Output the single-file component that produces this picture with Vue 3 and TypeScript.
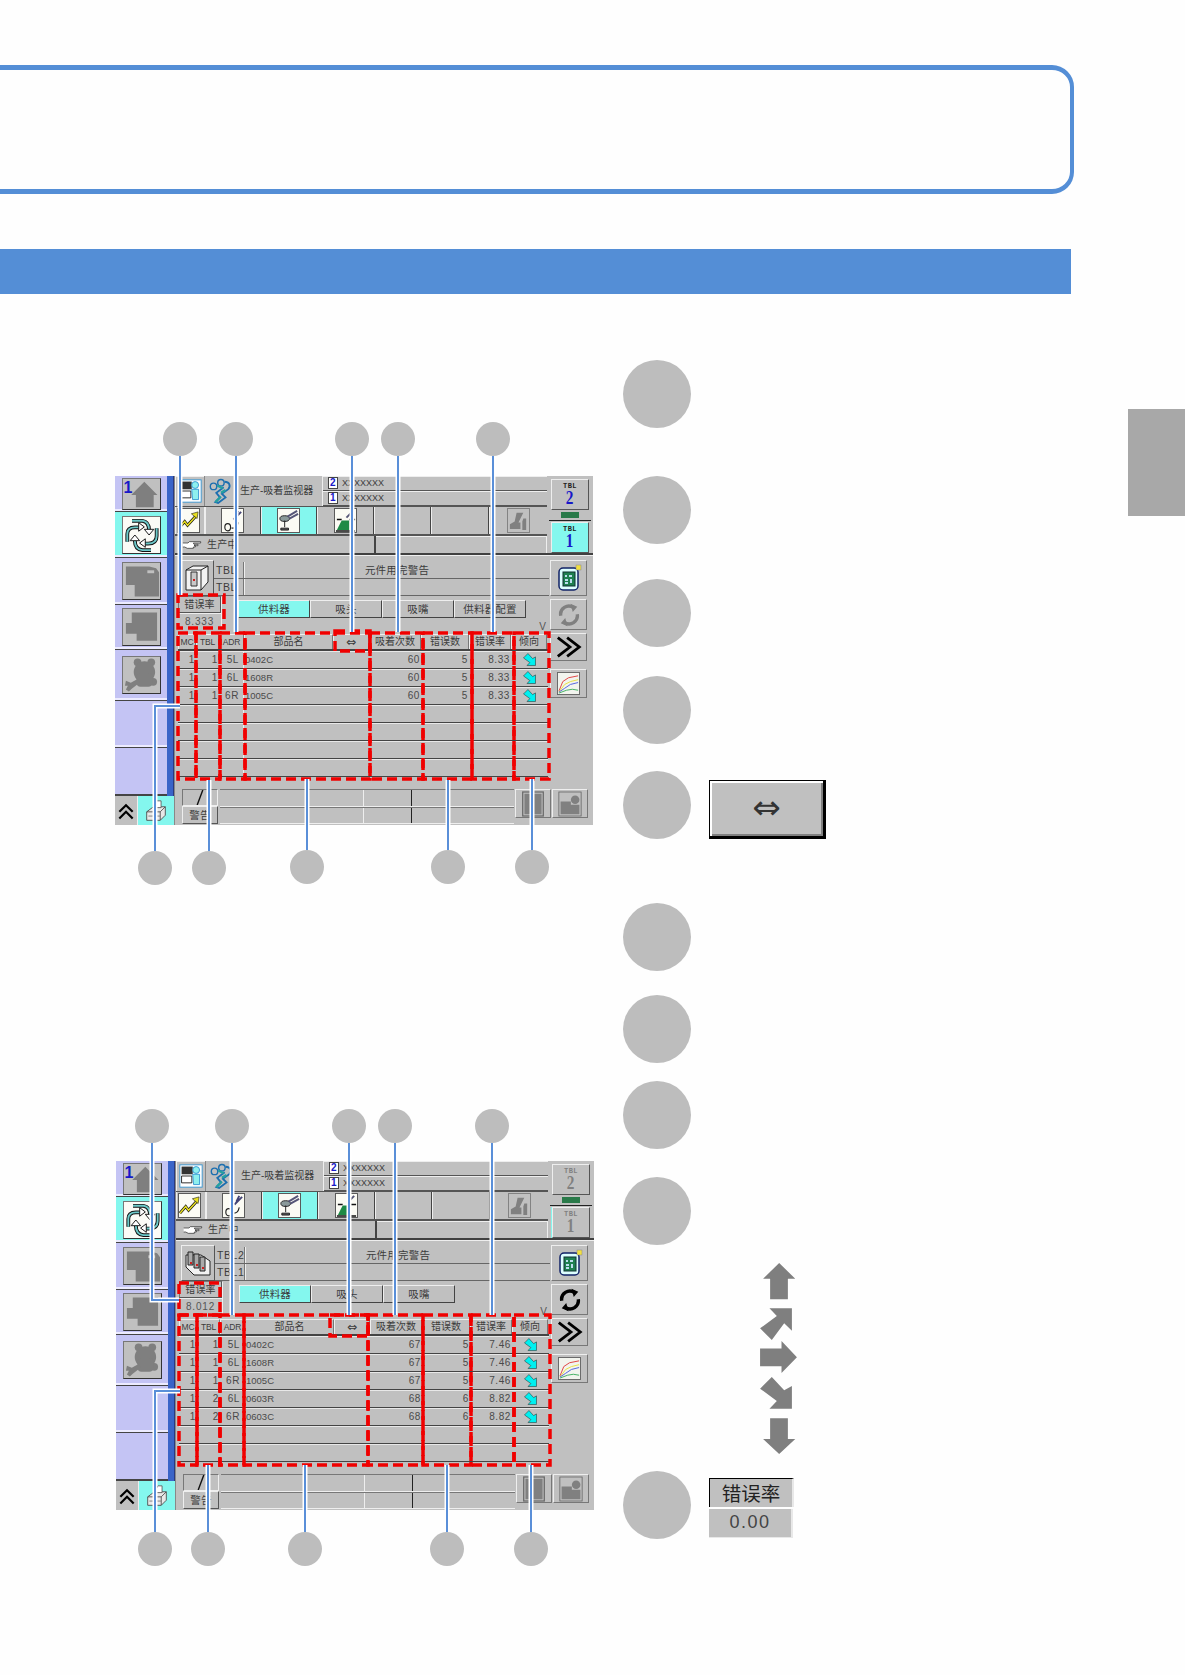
<script setup lang="ts">
interface Row { mc: string; tbl: string; adr: string; name: string; count: string; errs: string; rate: string }
interface Figure {
  id: number; top: number; height: number; screenTop: number; screenLeft: number;
  err: string; machine: string; tbl1: string; tbl2: string; active: boolean;
  tabs: string[]; rows: Row[];
  circles: number[][]; lines: string[]; rects: number[][];
}

function rowsFrom(list: string[][]): Row[] {
  const out: Row[] = list.map(r => ({ mc: r[0], tbl: r[1], adr: r[2], name: r[3], count: r[4], errs: r[5], rate: r[6] }));
  while (out.length < 7) out.push({ mc: '', tbl: '', adr: '', name: '', count: '', errs: '', rate: '' });
  return out;
}
function columns(edges: number[], y: number, h: number): number[][] {
  return edges.slice(0, -1).map((x, i) => [x, y, edges[i + 1] - x, h]);
}

const figures: Figure[] = [
  {
    id: 1, top: 422, height: 463, screenTop: 54, screenLeft: 115,
    err: '8.333', machine: 'ic-machine1', tbl1: 'TBL', tbl2: 'TBL', active: true,
    tabs: ['供料器', '吸头', '吸嘴', '供料器配置'],
    rows: rowsFrom([
      ['1', '1', '5L', '0402C', '60', '5', '8.33'],
      ['1', '1', '6L', '1608R', '60', '5', '8.33'],
      ['1', '1', '6R', '1005C', '60', '5', '8.33'],
    ]),
    circles: [[180, 439], [236, 439], [352, 439], [398, 439], [493, 439], [155, 868], [209, 868], [307, 867], [448, 867], [532, 867]],
    lines: ['180,456 180,595', '236,456 236,632', '352,456 352,632', '398,456 398,632', '493,456 493,632',
      '155,851 155,706 180,706', '209,851 209,780', '307,850 307,779', '448,850 448,780', '532,850 532,779'],
    rects: [[178, 595, 46, 33], [335, 631, 35, 20], ...columns([178, 196, 220, 245, 370, 423, 472, 514, 549], 633, 146)],
  },
  {
    id: 2, top: 1109, height: 457, screenTop: 52, screenLeft: 116,
    err: '8.012', machine: 'ic-machine3', tbl1: 'TBL1', tbl2: 'TBL2', active: false,
    tabs: ['供料器', '吸头', '吸嘴'],
    rows: rowsFrom([
      ['1', '1', '5L', '0402C', '67', '5', '7.46'],
      ['1', '1', '6L', '1608R', '67', '5', '7.46'],
      ['1', '1', '6R', '1005C', '67', '5', '7.46'],
      ['1', '2', '6L', '0603R', '68', '6', '8.82'],
      ['1', '2', '6R', '0603C', '68', '6', '8.82'],
    ]),
    circles: [[152, 1126], [232, 1126], [349, 1126], [395, 1126], [492, 1126], [155, 1549], [208, 1549], [305, 1549], [447, 1549], [531, 1549]],
    lines: ['152,1143 152,1300 179,1300', '232,1143 232,1315', '349,1143 349,1315', '395,1143 395,1315', '492,1143 492,1315',
      '155,1532 155,1391 180,1391', '208,1532 208,1465', '305,1532 305,1465', '447,1532 447,1465', '531,1532 531,1465'],
    rects: [[179, 1283, 41, 32], [330, 1315, 38, 21], ...columns([179, 197, 220, 244, 368, 423, 471, 514, 550], 1315, 150)],
  },
];

const headers = [
  { text: 'MC', cls: 'latin' }, { text: 'TBL', cls: 'latin' }, { text: 'ADR', cls: 'latin' },
  { text: '部品名', cls: '' }, { text: '⇔', cls: 'swap' },
  { text: '吸着次数', cls: '' }, { text: '错误数', cls: '' }, { text: '错误率', cls: '' }, { text: '倾向', cls: '' },
];
const topTabs = ['ic-zigzag', 'ic-nozzle', 'ic-head', 'ic-mount', '', '', 'ic-grey1'];

const legend = [
  { h: 116, kind: '' }, { h: 103, kind: '' }, { h: 97, kind: '' }, { h: 95, kind: '' },
  { h: 132, kind: 'button' }, { h: 92, kind: '' }, { h: 86, kind: '' }, { h: 96, kind: '' },
  { h: 294, kind: 'arrows' }, { h: 80, kind: 'rate' },
];
</script>

<template>
  <div class="page">
    <svg class="defs" aria-hidden="true">
      <symbol id="ic-house" viewBox="0 0 38 32"><path d="M22 3 36 17h-4v13H13V17H8z" fill="#7f7f7f" /></symbol>
      <symbol id="ic-cycle" viewBox="0 0 38 38">
        <g fill="none" stroke="#111" stroke-width="4">
          <path d="M9 4H20Q27 5 27 14" /><path d="M35 12V20Q35 28 26 28H21" /><path d="M29 35H20Q12 34 12 25" /><path d="M4 26V18Q4 11 12 11H17" />
        </g>
        <g fill="none" stroke="#6cc8c8" stroke-width="2">
          <path d="M9 4H20Q27 5 27 14" /><path d="M35 12V20Q35 28 26 28H21" /><path d="M29 35H20Q12 34 12 25" /><path d="M4 26V18Q4 11 12 11H17" />
        </g>
        <path d="M22 13h10l-5 6zM23 23v9l-6-4.500zM7 25h10l-5-6zM16 6v9l6-4.500z" fill="#fff" stroke="#111" />
      </symbol>
      <symbol id="ic-blob1" viewBox="0 0 38 36"><path d="M3 3H27L34 5 37 9V34H12V22H3z" fill="#7f7f7f" /><rect x="25" y="7" width="7" height="3" fill="#c0c0c0" /></symbol>
      <symbol id="ic-blob2" viewBox="0 0 38 36"><path d="M9 3H35V32H14V25H3V14H9z" fill="#7f7f7f" /></symbol>
      <symbol id="ic-bear" viewBox="0 0 38 36">
        <g fill="#7f7f7f">
          <circle cx="15" cy="5" r="4" /><circle cx="29" cy="5" r="4" /><circle cx="22" cy="15" r="11" />
          <circle cx="31" cy="25" r="4" /><rect x="14" y="16" width="16" height="14" rx="4" />
          <path d="M15 22 17 26 9 32 6 35 3 33 5 29 2 29 3 24 8 26z" />
        </g>
      </symbol>
      <symbol id="ic-chev2" viewBox="0 0 24 24"><path d="M4 13 12 5 20 13M4 21 12 13 20 21" fill="none" stroke="#000" stroke-width="2.600" /></symbol>
      <symbol id="ic-tray" viewBox="0 0 26 26">
        <path d="M2 14 10 8H24V18L18 24H2z" fill="#e8e8e8" stroke="#444" />
        <path d="M2 14H18V24M18 14 24 8" fill="none" stroke="#444" />
        <path d="M10 9 14 1H19V9z" fill="#fff" stroke="#555" />
        <path d="M4 19H18" stroke="#777" />
      </symbol>
      <symbol id="ic-person" viewBox="0 0 28 28">
        <rect x="1" y="1" width="26" height="26" fill="#fff" stroke="#2a90d0" />
        <rect x="3" y="3" width="13" height="9" fill="#333" />
        <path d="M3 14H15V22H3z" fill="none" stroke="#111" />
        <circle cx="20" cy="7" r="4" fill="#8ef0ee" stroke="#2a90d0" />
        <path d="M16 12H24V24H17z" fill="#8ef0ee" stroke="#2a90d0" />
      </symbol>
      <symbol id="ic-runner" viewBox="0 0 26 28">
        <circle cx="6" cy="9" r="3.500" fill="none" stroke="#1c6fb0" stroke-width="1.500" />
        <circle cx="14" cy="5" r="3.500" fill="none" stroke="#1c6fb0" stroke-width="1.500" />
        <path d="M18 4C23 4 25 8 22 12L15 17 19 21 11 27 8 26 13 21 9 16 17 10" fill="none" stroke="#1c6fb0" stroke-width="2" />
        <path d="M8 26 14 20M14 16 19 13M10 8 16 11" stroke="#25a0a0" stroke-width="2.500" />
      </symbol>
      <symbol id="ic-zigzag" viewBox="0 0 24 26">
        <rect x="0.500" y="0.500" width="23" height="25" fill="#fbfbf4" stroke="#555" />
        <path d="M2 21 8 14 11 18 20 8" fill="none" stroke="#111" stroke-width="3" />
        <path d="M2 21 8 14 11 18 20 8" fill="none" stroke="#e8e020" stroke-width="1.500" />
        <path d="M15 6 22 4 21 11z" fill="#e8e020" stroke="#111" stroke-width=".6" />
      </symbol>
      <symbol id="ic-nozzle" viewBox="0 0 24 26">
        <rect x="0.500" y="0.500" width="23" height="25" fill="#fbfbf4" stroke="#555" />
        <path d="M4 20C4 15 10 15 10 20S4 25 4 20M11 21C15 21 17 20 18 15" fill="none" stroke="#222" stroke-width="1.200" />
        <path d="M13 12 21 4M15 9 18 3" stroke="#447" stroke-width="2" />
      </symbol>
      <symbol id="ic-head" viewBox="0 0 24 26">
        <rect x="0.500" y="0.500" width="23" height="25" fill="#fbfbf4" stroke="#555" />
        <ellipse cx="8" cy="11" rx="5" ry="3" fill="#8a9a9a" stroke="#222" />
        <path d="M8 13V20M4 23H12V21H4z" stroke="#222" fill="#555" />
        <path d="M11 9 21 3M13 11 22 6" stroke="#557" stroke-width="2" />
      </symbol>
      <symbol id="ic-mount" viewBox="0 0 24 26">
        <rect x="0.500" y="0.500" width="23" height="25" fill="#fbfbf4" stroke="#555" />
        <path d="M3 23 8 13H16V23z" fill="#1e8a46" />
        <path d="M2 24H22M3 12H8M16 12H22" stroke="#111" stroke-width="1.500" />
        <path d="M13 10 20 3" stroke="#557" stroke-width="2" />
      </symbol>
      <symbol id="ic-grey1" viewBox="0 0 24 26">
        <rect x="0.500" y="0.500" width="23" height="25" fill="#c0c0c0" stroke="#808080" />
        <path d="M3 22V17L8 14 10 5H17L12 15H14V22z" fill="#808080" />
        <path d="M17 11H20V23H16V14z" fill="#808080" />
      </symbol>
      <symbol id="ic-hand" viewBox="0 0 30 14">
        <path d="M1 4H9L11 2H28V4H17L18 6H24V8H18L20 8V10H17V12H8L4 10H1" fill="#fff" stroke="#222" />
      </symbol>
      <symbol id="ic-machine1" viewBox="0 0 26 28">
        <path d="M2 6 9 2H24V18L17 26H2z" fill="#f2f2f2" stroke="#222" />
        <path d="M2 6H17V26M17 6 24 2" fill="none" stroke="#222" />
        <path d="M7 8H13V22H7z" fill="#c8c8c8" stroke="#333" />
        <rect x="9" y="15" width="2" height="2" fill="#d02020" />
      </symbol>
      <symbol id="ic-machine3" viewBox="0 0 26 28">
        <path d="M1 6H16L25 12V26H9L1 18z" fill="#f2f2f2" stroke="#222" />
        <path d="M3 3H8V16H3zM9 5H14V19H9zM15 8H20V22H15z" fill="#aaa" stroke="#222" />
        <rect x="5" y="13" width="2" height="2" fill="#d02020" /><rect x="11" y="15" width="2" height="2" fill="#d02020" /><rect x="17" y="18" width="2" height="2" fill="#d02020" />
      </symbol>
      <symbol id="ic-board" viewBox="0 0 26 28">
        <rect x="3" y="4" width="19" height="22" rx="4" fill="#dff" stroke="#126" stroke-width="1.500" />
        <rect x="7" y="8" width="12" height="14" fill="#1e8050" stroke="#133" />
        <path d="M9 11h2v2H9zM13 11h3v2h-3zM9 15h3v2H9zM14 15h2v4h-2zM9 18h3v2H9z" fill="#bde" />
        <rect x="20" y="1" width="5" height="5" fill="#f2e040" stroke="#888" stroke-width=".5" />
      </symbol>
      <symbol id="ic-refresh" viewBox="0 0 32 32">
        <path d="M5 17A11 11 0 0 1 22 6" fill="none" stroke="currentColor" stroke-width="4.500" />
        <path d="M27 15A11 11 0 0 1 10 26" fill="none" stroke="currentColor" stroke-width="4.500" />
        <path d="M18 1 27 5 21 12zM14 31 5 27 11 20z" fill="currentColor" />
      </symbol>
      <symbol id="ic-forward" viewBox="0 0 30 24"><path d="M3 2 16 12 3 22M13 2 26 12 13 22" fill="none" stroke="#000" stroke-width="3" /></symbol>
      <symbol id="ic-chart" viewBox="0 0 24 24">
        <rect x="0.500" y="0.500" width="23" height="23" fill="#f2f4ee" stroke="#666" />
        <path d="M2 20 6 10 12 6 22 4" fill="none" stroke="#e04040" />
        <path d="M2 21 8 13 14 10 22 8" fill="none" stroke="#e8e040" />
        <path d="M2 21 8 17 14 13 22 11" fill="none" stroke="#5060e0" />
        <path d="M2 22 10 19 16 18 22 19" fill="none" stroke="#40b060" />
      </symbol>
      <symbol id="ic-trend" viewBox="446 406 103 103">
        <polygon points="485,410 522,450 545,437 545,505 478,505 500,482 450,445" fill="#00f0f0" stroke="#222" stroke-width="4" />
      </symbol>
      <symbol id="ic-book" viewBox="0 0 28 30"><rect x="2" y="1" width="24" height="28" fill="none" stroke="#6a6a6a" stroke-width="1.500" /><rect x="4" y="3" width="20" height="24" fill="#808080" /></symbol>
      <symbol id="ic-lock" viewBox="0 0 28 30">
        <rect x="1" y="1" width="26" height="28" fill="none" stroke="#6a6a6a" />
        <path d="M3 12H15V27H3zM15 16H25V27H15z" fill="#808080" /><circle cx="20" cy="10" r="5" fill="#808080" />
      </symbol>
    </svg>

    <main class="main">
      <div class="note-box"></div>
      <div class="section-bar"></div>

      <div class="content">
        <div class="figures">
          <section
            v-for="fig in figures"
            :key="fig.id"
            class="figure"
            :class="'fig-' + fig.id"
            :style="{ height: fig.height + 'px' }"
          >
            <div class="screen" :class="{ off: !fig.active }" :style="{ marginTop: fig.screenTop + 'px', marginLeft: fig.screenLeft + 'px' }">
              <div class="rail">
                <div class="rail-top">
                  <div class="rail-cells">
                    <div class="rail-cell c36">
                      <div class="rail-btn h32"><span class="digit">1</span><svg class="i-fill"><use href="#ic-house" /></svg></div>
                    </div>
                    <div class="rail-cell c46 sel"><div class="rail-btn white h38"><svg class="i-fill"><use href="#ic-cycle" /></svg></div></div>
                    <div class="rail-cell c47"><div class="rail-btn"><svg class="i-fill"><use href="#ic-blob1" /></svg></div></div>
                    <div class="rail-cell c45"><div class="rail-btn"><svg class="i-fill"><use href="#ic-blob2" /></svg></div></div>
                    <div class="rail-cell c51"><div class="rail-btn"><svg class="i-fill"><use href="#ic-bear" /></svg></div></div>
                    <div class="rail-cell c47"></div>
                    <div class="rail-cell c48 end"></div>
                  </div>
                  <div class="rail-blue"></div>
                </div>
                <div class="rail-bottom">
                  <div class="rail-up"><svg class="i-20"><use href="#ic-chev2" /></svg></div>
                  <div class="rail-tray"><svg class="i-22"><use href="#ic-tray" /></svg></div>
                </div>
              </div>

              <div class="panel">
                <div class="head">
                  <div class="head-left">
                    <div class="h-row1">
                      <div class="cell-person"><svg class="i-28"><use href="#ic-person" /></svg></div>
                      <div class="cell-title"><svg class="i-runner"><use href="#ic-runner" /></svg><span>生产-吸着监视器</span></div>
                      <div class="cell-boards">
                        <div class="board-row"><span class="num">2</span><span class="xx">XXXXXXX</span></div>
                        <div class="board-row"><span class="num">1</span><span class="xx">XXXXXXX</span></div>
                      </div>
                    </div>
                    <div class="h-row2">
                      <div
                        v-for="(t, i) in topTabs"
                        :key="i"
                        class="top-tab"
                        :class="['tt-' + i, { on: i === 2 }]"
                      >
                        <svg v-if="t" class="i-tab"><use :href="'#' + t" /></svg>
                      </div>
                    </div>
                    <div class="h-row3">
                      <div class="status"><svg class="i-hand"><use href="#ic-hand" /></svg><span>生产中</span></div>
                      <div class="status-right"></div>
                    </div>
                  </div>
                  <div class="head-right">
                    <div class="tbl-btn"><small>TBL</small><b>2</b></div>
                    <div class="tbl-mid"><i></i></div>
                    <div class="tbl-btn" :class="{ cyan: fig.active, strip: !fig.active }"><small>TBL</small><b>1</b></div>
                  </div>
                </div>

                <div class="body">
                  <div class="upper">
                    <div class="upper-left">
                      <div class="row-a">
                        <div class="machine-btn"><svg class="i-machine"><use :href="'#' + fig.machine" /></svg></div>
                        <div class="tbl-lines">
                          <div class="tl"><span class="tl-name">{{ fig.tbl2 }}</span><span class="tl-text">元件用完警告</span></div>
                          <div class="tl"><span class="tl-name">{{ fig.tbl1 }}</span><span class="tl-text"></span></div>
                        </div>
                      </div>
                      <div class="row-b">
                        <div class="err">
                          <div class="err-h">错误率</div>
                          <div class="err-v">{{ fig.err }}</div>
                        </div>
                        <div class="sub-tabs">
                          <div v-for="(t, i) in fig.tabs" :key="t" class="sub-tab" :class="{ on: i === 0 }">{{ t }}</div>
                        </div>
                        <span class="vee">V</span>
                      </div>
                      <div class="tbl">
                        <div class="tr th">
                          <div v-for="h in headers" :key="h.text" class="thc" :class="h.cls">{{ h.text }}</div>
                        </div>
                        <div v-for="(r, i) in fig.rows" :key="i" class="tr td">
                          <div class="num-c">{{ r.mc }}</div>
                          <div class="num-c">{{ r.tbl }}</div>
                          <div class="num-c adr">{{ r.adr }}</div>
                          <div class="name-c">{{ r.name }}</div>
                          <div class="num-c">{{ r.count }}</div>
                          <div class="num-c">{{ r.errs }}</div>
                          <div class="num-c">{{ r.rate }}</div>
                          <div class="trend"><svg v-if="r.name" class="i-trend"><use href="#ic-trend" /></svg></div>
                        </div>
                      </div>
                    </div>
                    <div class="upper-right">
                      <div class="side-btn h35"><svg class="i-board"><use href="#ic-board" /></svg></div>
                      <div class="side-btn h31" :class="fig.active ? 'grey-ic' : 'black-ic'"><svg class="i-refresh"><use href="#ic-refresh" /></svg></div>
                      <div class="side-btn h28"><svg class="i-forward"><use href="#ic-forward" /></svg></div>
                      <div class="side-btn h29 mt8"><svg class="i-chart"><use href="#ic-chart" /></svg></div>
                    </div>
                  </div>

                  <div class="lower">
                    <div class="warn">
                      <div class="warn-top"><svg class="i-slash" viewBox="0 0 8 16"><path d="M7 0 1 16" stroke="#111" stroke-width="1.500" /></svg></div>
                      <div class="warn-btn">警告</div>
                    </div>
                    <div class="msgs">
                      <div class="msg"><i></i><i></i><i></i></div>
                      <div class="msg"><i></i><i></i><i></i></div>
                    </div>
                    <div class="low-btn"><svg class="i-low"><use href="#ic-book" /></svg></div>
                    <div class="low-btn"><svg class="i-low"><use href="#ic-lock" /></svg></div>
                  </div>
                </div>
              </div>
            </div>

            <svg class="annot" :viewBox="'0 ' + fig.top + ' 623 ' + fig.height" :width="623" :height="fig.height">
              <rect
                v-for="(r, i) in fig.rects"
                :key="'r' + i"
                :x="r[0]"
                :y="r[1]"
                :width="r[2]"
                :height="r[3]"
                fill="none"
                stroke="#f00000"
                stroke-width="3.5"
                stroke-dasharray="10 5"
              />
              <polyline v-for="(l, i) in fig.lines" :key="'h' + i" :points="l" fill="none" stroke="#fff" stroke-width="5" />
              <polyline v-for="(l, i) in fig.lines" :key="'l' + i" :points="l" fill="none" stroke="#5a8fd8" stroke-width="2" />
              <circle v-for="(c, i) in fig.circles" :key="'c' + i" :cx="c[0]" :cy="c[1]" r="17" fill="#bdbdbd" />
            </svg>
          </section>
        </div>

        <div class="legend">
          <div v-for="(item, i) in legend" :key="i" class="legend-row" :style="{ height: item.h + 'px' }">
            <div class="dot"></div>
            <div v-if="item.kind === 'button'" class="swap-btn">⇔</div>
            <svg v-if="item.kind === 'arrows'" class="arrows" viewBox="450 70 110 570">
              <g fill="#7f7f7f">
                <polygon points="507,70 555,117 533,117 533,178 480,178 480,117 459,117" />
                <polygon points="478,205 545,205 545,272 522,250 485,300 450,265 500,228" />
                <polygon points="514,303 560,351 514,398 514,378 450,378 450,325 514,325" />
                <polygon points="485,410 522,450 545,437 545,505 478,505 500,482 450,445" />
                <polygon points="480,533 533,533 533,595 555,595 507,640 459,595 480,595" />
              </g>
            </svg>
            <div v-if="item.kind === 'rate'" class="rate">
              <div class="rate-h">错误率</div>
              <div class="rate-v">0.00</div>
            </div>
          </div>
        </div>
      </div>
    </main>

    <aside class="edge-tab"></aside>
  </div>
</template>

<style>
html, body { margin: 0; background: #fff; }
</style>

<style scoped>
.page { display: flex; width: 1185px; height: 1675px; overflow: hidden; background: #fefefe; font-family: "Liberation Sans", "Noto Sans CJK SC", sans-serif; }
.defs { position: absolute; width: 0; height: 0; }
.main { width: 1128px; flex: none; }
.edge-tab { width: 57px; height: 107px; margin-top: 409px; background: #a8a8a8; }

.note-box { box-sizing: border-box; width: 1104px; height: 129px; margin-top: 65px; margin-left: -30px; border: 5px solid #548ed6; border-right-width: 4px; border-radius: 22px; }
.section-bar { width: 1071px; height: 45px; margin-top: 55px; background: #548ed6; }

.content { display: flex; }
.figures { width: 623px; flex: none; padding-top: 128px; }
.figure { position: relative; width: 623px; display: flow-root; }
.fig-2 { margin-top: 224px; }
.annot { position: absolute; left: 0; top: 0; pointer-events: none; }

/* screen */
.screen { display: flex; width: 478px; height: 349px; background: #c0c0c0; color: #3c3c3c; font-size: 10px; line-height: 1; letter-spacing: .2px; }
.screen * { box-sizing: border-box; }
.rail { width: 59px; flex: none; display: flex; flex-direction: column; }
.rail-top { display: flex; height: 320px; }
.rail-cells { width: 52px; background: #c4c4f4; display: flex; flex-direction: column; }
.rail-blue { width: 7px; background: #3a64c8; border-right: 1px solid #2a3a80; }
.rail-cell { display: flex; align-items: center; justify-content: center; border-bottom: 1px solid #444; box-shadow: inset 0 -2px 0 #ecebff; }
.rail-cell.end { border-bottom: 2px solid #444; box-shadow: none; }
.rail-cell.sel { background: #84f7ee; }
.c36 { height: 36px; } .c45 { height: 45px; } .c46 { height: 46px; } .c47 { height: 47px; } .c48 { height: 48px; } .c51 { height: 51px; }
.rail-btn { position: relative; width: 39px; height: 38px; background: #c0c0c0; border: 1px solid #777; border-right-color: #333; border-bottom-color: #333; }
.rail-btn.h32 { height: 32px; }
.rail-btn.h38 { height: 38px; }
.rail-btn.white { background: #fbfbf6; }
.i-fill { display: block; width: 100%; height: 100%; }
.digit { position: absolute; left: 1px; top: 0; font: bold 16px "Liberation Sans", sans-serif; color: #1818c8; }
.rail-bottom { display: flex; height: 29px; }
.rail-up { width: 23px; display: flex; align-items: center; justify-content: center; background: #c0c0c0; border-right: 1px solid #eee; }
.rail-tray { flex: 1; display: flex; align-items: center; justify-content: center; background: #84f7ee; }
.i-20 { width: 20px; height: 20px; }
.i-22 { width: 22px; height: 24px; }

.panel { flex: 1; display: flex; flex-direction: column; border-left: 1px solid #888; min-width: 0; }
.head { display: flex; height: 77px; }
.head-left { width: 372px; flex: none; }
.h-row1 { display: flex; height: 31px; border-bottom: 1px solid #555; }
.cell-person { width: 30px; display: flex; align-items: center; justify-content: center; border-right: 1px solid #888; box-shadow: inset 1px 1px #eee; }
.i-28 { width: 24px; height: 26px; }
.cell-title { width: 118px; display: flex; align-items: center; gap: 8px; padding-left: 3px; border-right: 1px solid #eee; }
.i-runner { width: 24px; height: 28px; flex: none; }
.cell-title span { white-space: nowrap; letter-spacing: 0; }
.cell-boards { flex: 1; display: flex; flex-direction: column; }
.board-row { flex: 1; display: flex; align-items: center; gap: 4px; padding-left: 5px; border-bottom: 1px solid #555; box-shadow: inset 0 1px #eee; }
.num { width: 10px; height: 12px; background: #fff; border: 1px solid #444; color: #1818c8; font: bold 10px/10px "Liberation Sans", sans-serif; text-align: center; }
.xx { font-size: 9px; letter-spacing: 0; }
.h-row2 { display: flex; height: 29px; border-bottom: 2px solid #555; }
.top-tab { display: flex; align-items: center; justify-content: center; border-right: 1px solid #444; box-shadow: inset 1px 0 #eee; }
.tt-0 { width: 30px; border-right-color: #eee; padding-right: 2px; } .tt-1 { width: 56px; } .tt-2 { width: 56px; } .tt-3 { width: 57px; } .tt-4 { width: 57px; } .tt-5 { width: 58px; } .tt-6 { width: 58px; border-right: none; }
.top-tab.on { background: #84f7ee; }
.i-tab { width: 23px; height: 25px; }
.h-row3 { display: flex; height: 17px; }
.status { width: 201px; display: flex; align-items: center; gap: 5px; padding-left: 7px; border-right: 2px solid #444; }
.i-hand { width: 20px; height: 12px; flex: none; }
.status-right { flex: 1; border-top: 1px solid #eee; border-right: 1px solid #eee; }
.head-right { flex: 1; display: flex; flex-direction: column; padding: 3px 4px 0; }
.tbl-btn { height: 31px; display: flex; flex-direction: column; align-items: center; border: 1px solid #555; border-top-color: #eee; border-left-color: #eee; color: #1818c8; padding-top: 3px; }
.tbl-btn small { font: bold 7px/7px "Liberation Mono", monospace; color: #222; letter-spacing: .5px; }
.tbl-btn b { font: bold 18px/17px "Liberation Serif", serif; transform: scaleX(.85); }
.tbl-btn.cyan { background: #84f7ee; }
.tbl-btn.strip { box-shadow: -1px 0 #84f7ee; }
.off .tbl-btn { color: #808080; }
.off .tbl-btn small { color: #808080; }
.tbl-mid { height: 10px; display: flex; flex-direction: column; align-items: center; margin: 1px -2px 1px; border-bottom: 1px solid #222; }
.tbl-mid i { width: 18px; height: 6px; background: #2a7a4a; margin-top: 1px; }

.body { flex: 1; display: flex; flex-direction: column; padding: 5px 3px 0 3px; border-top: 2px solid #404040; box-shadow: inset 0 1px #eee; position: relative; }
.upper { display: flex; height: 221px; gap: 1px; }
.upper-left { width: 371px; flex: none; display: flex; flex-direction: column; }
.row-a { display: flex; height: 36px; }
.machine-btn { width: 34px; margin-left: 2px; display: flex; align-items: center; justify-content: center; border: 1px solid #555; border-top-color: #eee; border-left-color: #eee; }
.i-machine { width: 26px; height: 28px; }
.tbl-lines { flex: 1; display: flex; flex-direction: column; padding-top: 2px; }
.tl { flex: 1; display: flex; align-items: center; border-bottom: 1px solid #666; }
.tl-name { width: 30px; padding-left: 2px; border-right: 1px solid #777; height: 100%; display: flex; align-items: center; letter-spacing: .6px; font-size: 10.500px; }
.tl-text { flex: 1; text-align: center; height: 100%; display: flex; align-items: center; justify-content: center; border-left: 1px solid #eee; font-size: 10.500px; }
.row-b { position: relative; display: flex; height: 38px; }
.err { width: 43px; flex: none; }
.err-h { height: 17px; text-align: center; line-height: 16px; border: 1px solid #555; border-top-color: #777; border-left-color: #777; box-shadow: 1px 1px #eee; }
.err-v { height: 15px; text-align: center; line-height: 15px; margin-top: 1px; color: #555; letter-spacing: .8px; box-shadow: 1px 0 #eee; }
.sub-tabs { display: flex; height: 18px; margin: 4px 0 0 17px; }
.sub-tab { width: 72px; text-align: center; line-height: 16px; border-right: 1px solid #444; border-bottom: 1px solid #444; border-top: 1px solid #eee; border-left: 1px solid #eee; font-size: 10.500px; }
.sub-tab.on { background: #84f7ee; }
.vee { position: absolute; right: 3px; bottom: 2px; font-size: 10px; color: #555; }

.tbl { width: 370px; }
.tr { display: grid; grid-template-columns: 18px 23px 25px 89px 36px 52px 48px 42px 36px; }
.th { height: 17px; border-bottom: 2px solid #444; }
.thc { text-align: center; line-height: 14px; border-top: 1px solid #eee; border-left: 1px solid #eee; border-right: 1px solid #777; font-size: 10px; white-space: nowrap; overflow: hidden; letter-spacing: 0; }
.thc.latin { font-size: 8.500px; letter-spacing: -.2px; }
.thc.swap { font-family: "DejaVu Sans", sans-serif; font-size: 12px; }
.td { height: 18px; border-bottom: 1px solid #444; box-shadow: inset 0 1px #e8e8e8; }
.td .num-c { text-align: right; line-height: 17px; padding-right: 1px; color: #4a4a4a; letter-spacing: .6px; }
.td .adr { padding-right: 4px; border-right: 1px solid #eee; }
.name-c { grid-column: span 2; line-height: 17px; padding-left: 1px; letter-spacing: 0; color: #4a4a4a; font-size: 9.500px; }
.trend { display: flex; align-items: center; justify-content: center; }
.i-trend { width: 13px; height: 13px; }

.upper-right { width: 37px; flex: none; display: flex; flex-direction: column; }
.side-btn { display: flex; align-items: center; justify-content: center; border: 1px solid #777; border-top-color: #eee; border-left-color: #eee; margin-bottom: 3px; }
.h35 { height: 36px; } .h31 { height: 31px; } .h28 { height: 28px; margin-bottom: 0; } .h29 { height: 29px; }
.mt8 { margin-top: 8px; }
.i-board { width: 26px; height: 28px; }
.i-refresh { width: 24px; height: 24px; }
.i-forward { width: 28px; height: 24px; }
.i-chart { width: 23px; height: 23px; }
.grey-ic { color: #808080; }
.black-ic { color: #000; }

.lower { display: flex; margin-top: 8px; padding-left: 4px; height: 35px; }
.warn { width: 36px; display: flex; flex-direction: column; }
.warn-top { height: 17px; display: flex; justify-content: center; border: 1px solid #eee; border-top-color: #777; border-left-color: #777; }
.i-slash { width: 8px; height: 15px; }
.warn-btn { height: 18px; text-align: center; line-height: 16px; border: 1px solid #555; border-top-color: #eee; border-left-color: #eee; font-size: 10.500px; }
.msgs { width: 294px; margin-left: 2px; display: flex; flex-direction: column; }
.msg { flex: 1; display: flex; border-top: 1px solid #777; border-bottom: 1px solid #eee; }
.msg i { display: block; }
.msg i:nth-child(1) { width: 144px; border-right: 1px solid #eee; }
.msg i:nth-child(2) { width: 48px; border-right: 1px solid #222; }
.msg i:nth-child(3) { flex: 1; }
.low-btn { width: 36px; height: 29px; margin-left: 1px; display: flex; align-items: center; justify-content: center; border: 1px solid #777; border-top-color: #eee; border-left-color: #eee; }
.i-low { width: 24px; height: 26px; }

/* legend */
.legend { padding-top: 66px; width: 300px; }
.legend-row { position: relative; display: flex; align-items: flex-start; }
.dot { width: 68px; height: 68px; border-radius: 50%; background: #bdbdbd; flex: none; }
.swap-btn { box-sizing: border-box; width: 117px; height: 59px; margin: 9px 0 0 18px; background: #c0c0c0; border: 1px solid #000; border-bottom: 3px solid #000; border-right: 3px solid #000; box-shadow: inset 2px 2px 0 #fff, inset -2px -2px 0 #808080; font: 34px/52px "DejaVu Sans", sans-serif; text-align: center; color: #333; }
.arrows { position: absolute; left: 137px; top: 86px; width: 37px; height: 191px; }
.rate { width: 85px; margin: 7px 0 0 18px; }
.rate-h { box-sizing: border-box; height: 29px; background: #c0c0c0; border-top: 1px solid #000; border-left: 1px solid #000; border-right: 2px solid #e8e8e8; font: 19.500px/27px "Noto Sans CJK SC", sans-serif; text-align: center; color: #222; }
.rate-v { box-sizing: border-box; height: 29px; margin-top: 2px; width: 84px; background: #c0c0c0; border-right: 2px solid #e8e8e8; border-bottom: 1px solid #e8e8e8; font: 18px/27px "Liberation Sans", sans-serif; letter-spacing: 1.5px; text-align: center; color: #444; }
</style>
